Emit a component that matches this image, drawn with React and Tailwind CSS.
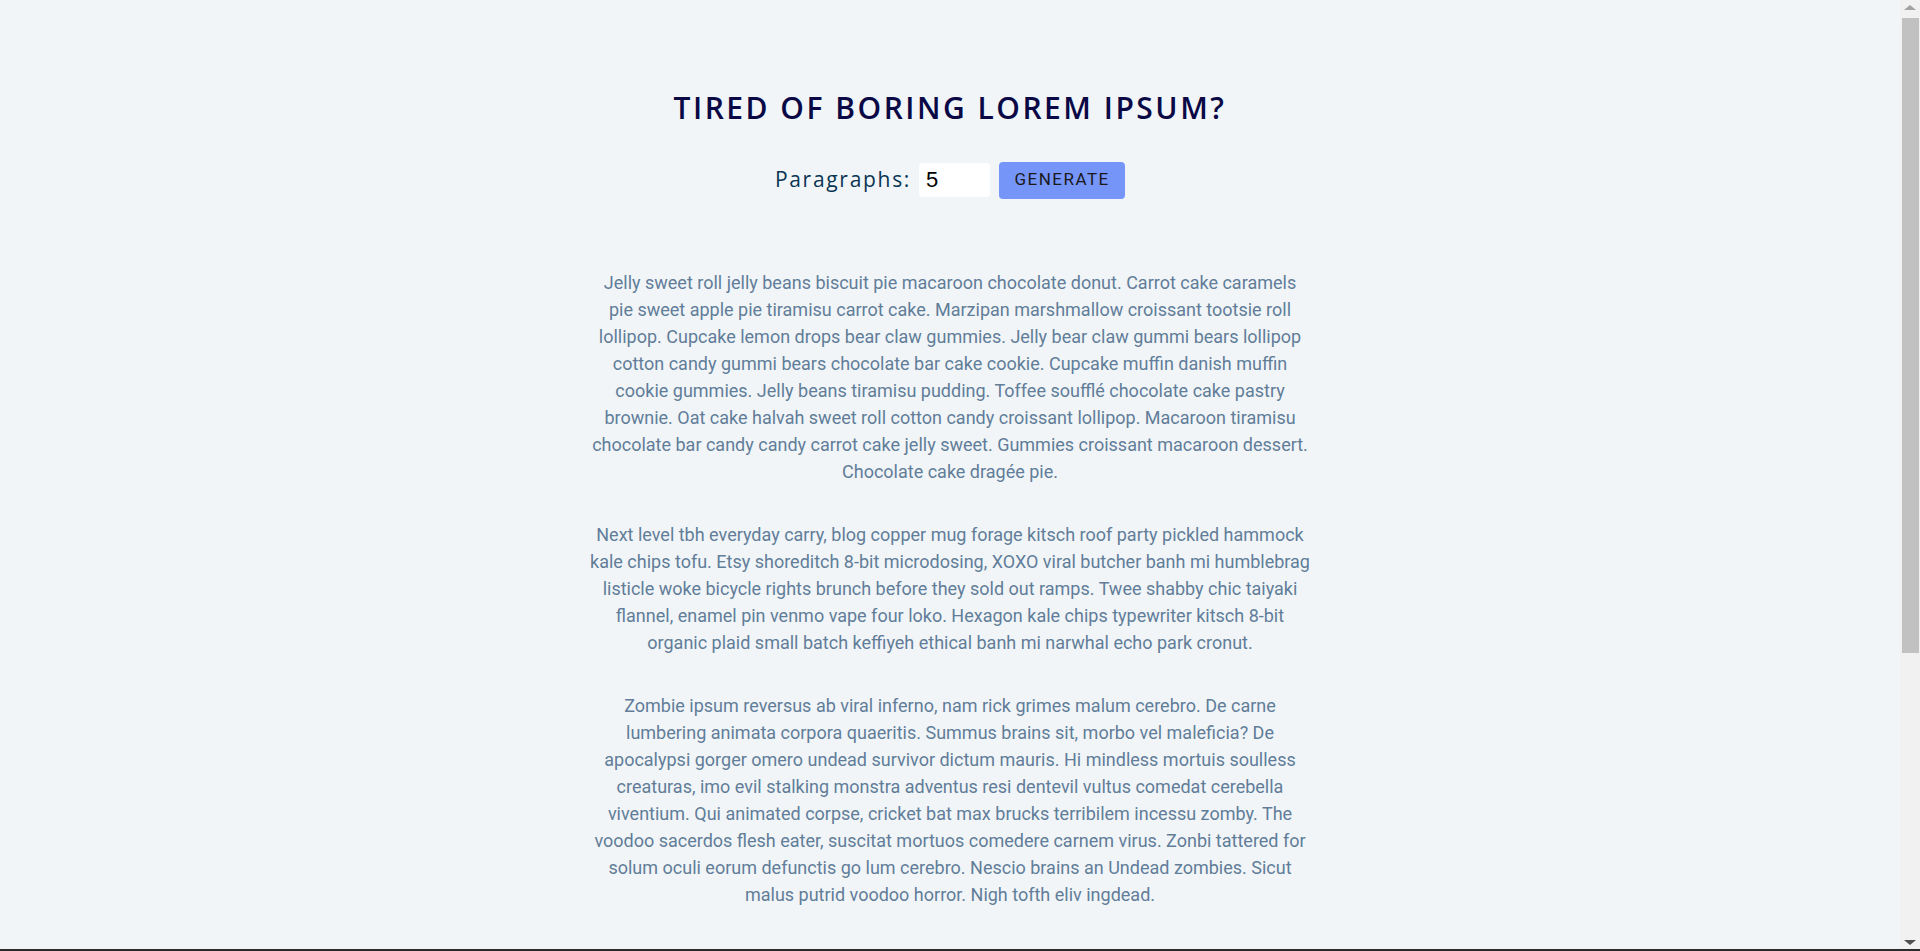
import React, { useState } from "react";

const text = [
  "Jelly sweet roll jelly beans biscuit pie macaroon chocolate donut. Carrot cake caramels pie sweet apple pie tiramisu carrot cake. Marzipan marshmallow croissant tootsie roll lollipop. Cupcake lemon drops bear claw gummies. Jelly bear claw gummi bears lollipop cotton candy gummi bears chocolate bar cake cookie. Cupcake muffin danish muffin cookie gummies. Jelly beans tiramisu pudding. Toffee soufflé chocolate cake pastry brownie. Oat cake halvah sweet roll cotton candy croissant lollipop. Macaroon tiramisu chocolate bar candy candy carrot cake jelly sweet. Gummies croissant macaroon dessert. Chocolate cake dragée pie.",
  "Next level tbh everyday carry, blog copper mug forage kitsch roof party pickled hammock kale chips tofu. Etsy shoreditch 8-bit microdosing, XOXO viral butcher banh mi humblebrag listicle woke bicycle rights brunch before they sold out ramps. Twee shabby chic taiyaki flannel, enamel pin venmo vape four loko. Hexagon kale chips typewriter kitsch 8-bit organic plaid small batch keffiyeh ethical banh mi narwhal echo park cronut.",
  "Zombie ipsum reversus ab viral inferno, nam rick grimes malum cerebro. De carne lumbering animata corpora quaeritis. Summus brains sit, morbo vel maleficia? De apocalypsi gorger omero undead survivor dictum mauris. Hi mindless mortuis soulless creaturas, imo evil stalking monstra adventus resi dentevil vultus comedat cerebella viventium. Qui animated corpse, cricket bat max brucks terribilem incessu zomby. The voodoo sacerdos flesh eater, suscitat mortuos comedere carnem virus. Zonbi tattered for solum oculi eorum defunctis go lum cerebro. Nescio brains an Undead zombies. Sicut malus putrid voodoo horror. Nigh tofth eliv ingdead.",
  "Cat ipsum dolor sit amet, hunt anything that moves. Sleep on keyboard ask to be pet then attack owners hand, knock over christmas tree. Chase red laser dot stare at ceiling light yet purr when being pet, chew iPad power cord. Scratch at the door then walk away.",
  "Bacon ipsum dolor amet pork belly ham hock t-bone, tri-tip chuck brisket short ribs. Kielbasa beef ribs ground round pancetta, turducken jerky pig sirloin. Pastrami shankle venison swine fatback cupim meatloaf.",
];

function FakeScrollbar() {
  return (
    <div className="fixed top-0 right-0 z-10 flex h-screen w-[20px] flex-col items-center bg-[#f1f1f1]">
      <div className="mt-[5px] h-0 w-0 border-x-[6px] border-b-[5px] border-x-transparent border-b-[#a3a3a3]" />
      <div className="mt-[8px] h-[635px] w-[17px] bg-[#c1c1c1]" />
      <div className="mt-auto mb-[6px] h-0 w-0 border-x-[6px] border-t-[5px] border-x-transparent border-t-[#505050]" />
    </div>
  );
}

export default function App() {
  const [count, setCount] = useState(5);

  return (
    <div className="min-h-screen bg-[#f1f5f8] pr-[20px] font-['Roboto',sans-serif]">
      <FakeScrollbar />
      <div className="fixed bottom-0 left-0 right-0 z-20 h-[2px] bg-[#2b2b2b]" />

      <section className="mx-auto w-[720px] pt-[89px] pb-[60px] text-center">
        <h3 className="font-['Open_Sans',sans-serif] text-[30px] leading-[37.5px] font-semibold tracking-[2.5px] uppercase text-[#0a0946]">
          tired of boring lorem ipsum?
        </h3>

        <form className="mt-[35px] flex items-center justify-center">
          <label
            htmlFor="amount"
            className="font-['Open_Sans',sans-serif] text-[21px] tracking-[1.7px] text-[#0a3553]"
          >
            Paragraphs:
          </label>
          <input
            id="amount"
            type="number"
            value={count}
            onChange={(e) => setCount(e.target.value)}
            className="mr-[9px] ml-[8px] h-[34px] w-[71px] rounded-[4px] bg-white px-[7px] font-['Liberation_Sans',Arial,sans-serif] text-[22px] text-black outline-none [appearance:textfield]"
          />
          <button
            type="submit"
            className="h-[37px] w-[126px] rounded-[4px] bg-[#7595f9] font-['Roboto',sans-serif] text-[17px] tracking-[1.5px] uppercase text-[#1a1a1a]"
          >
            generate
          </button>
        </form>

        <article className="mt-[70px]">
          {text.slice(0, count).map((item, i) => (
            <p key={i} className="mb-9 text-[18px] leading-[27px] text-[#617d98]">
              {item}
            </p>
          ))}
        </article>
      </section>
    </div>
  );
}
